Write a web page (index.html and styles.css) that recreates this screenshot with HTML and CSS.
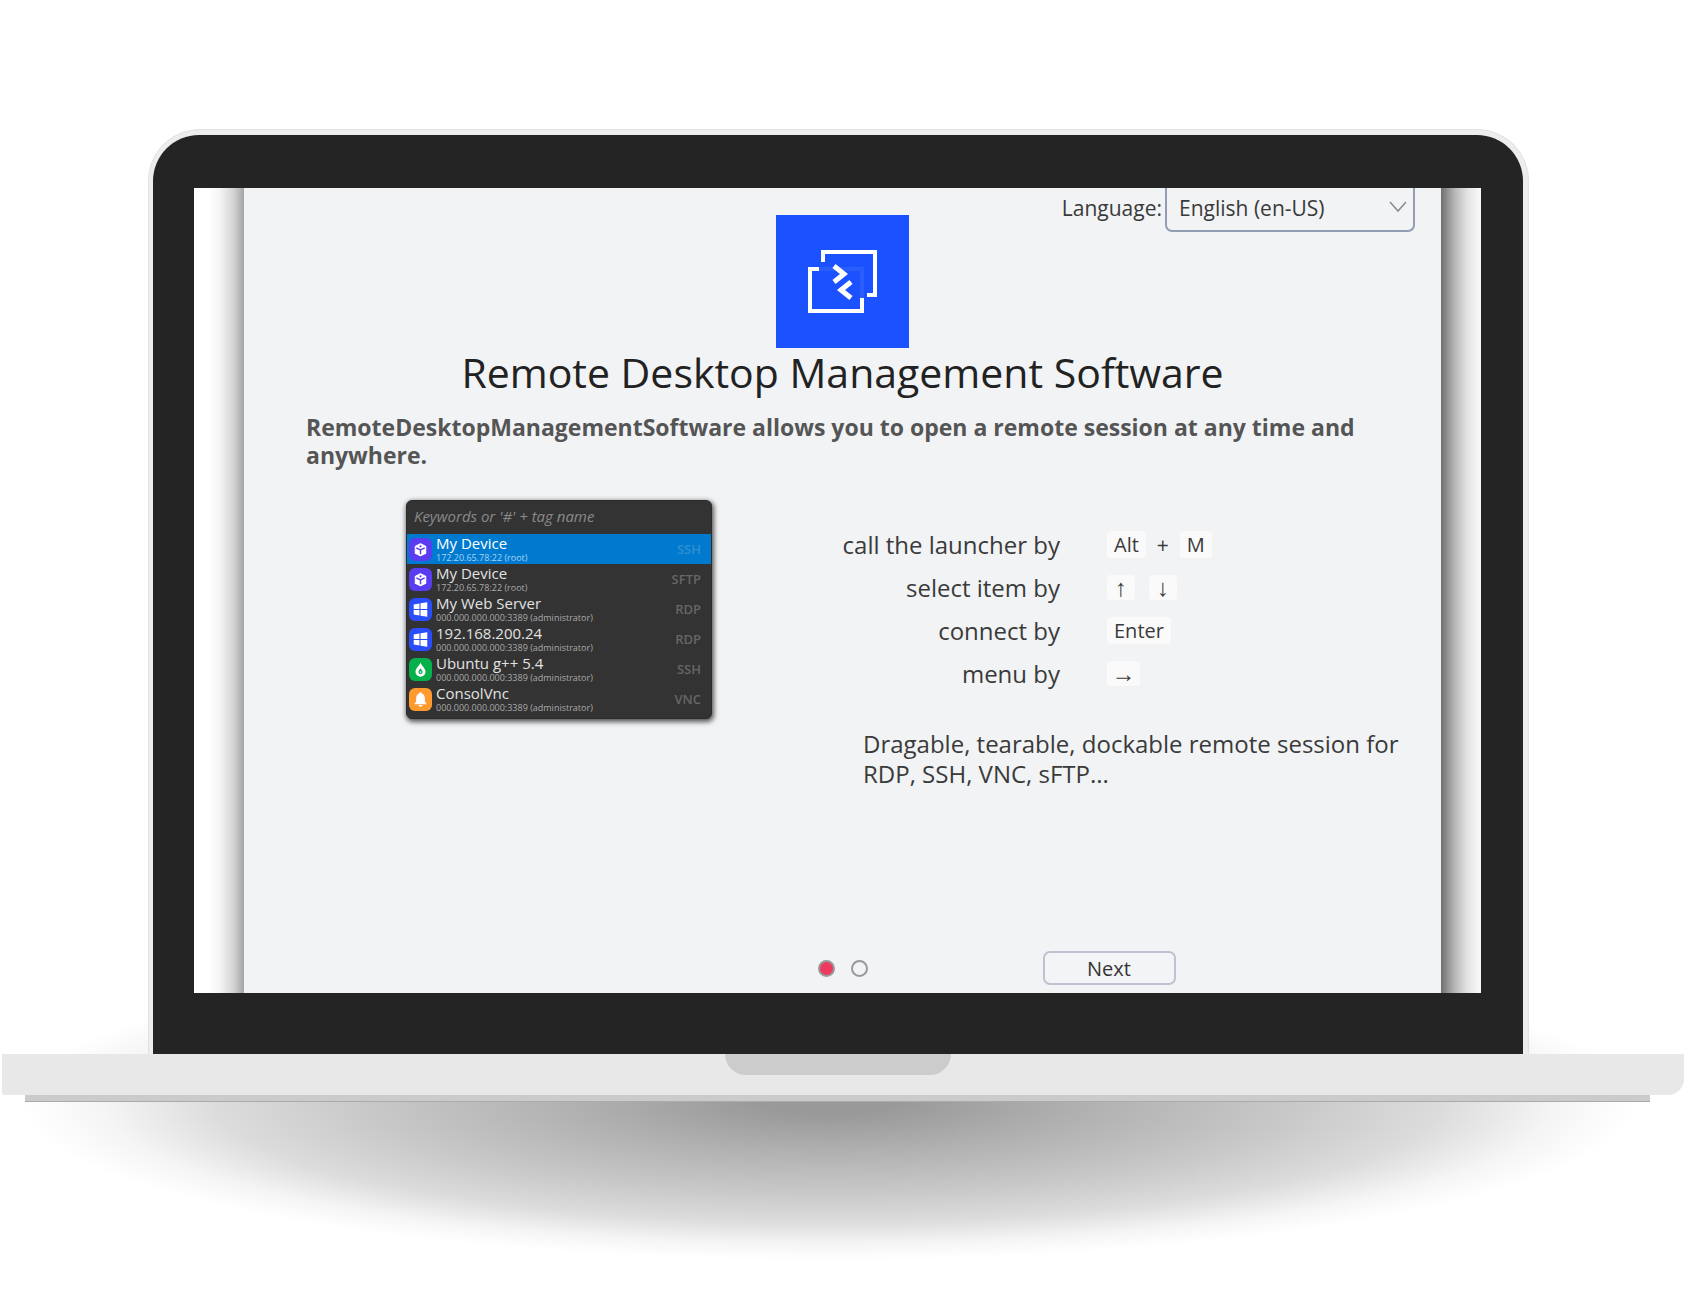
FILE: index.html
```html
<!DOCTYPE html>
<html lang="en">
<head>
<meta charset="utf-8">
<meta name="viewport" content="width=device-width, initial-scale=1">
<title>Remote Desktop Management Software</title>
<link rel="stylesheet" href="styles.css">
</head>
<body>
<svg class="symbols" aria-hidden="true">
  <symbol id="cube" viewBox="0 0 22 22">
    <path fill="#fff" stroke="#fff" stroke-linejoin="round" d="M11 5.500 16 8V14.500L11 17 6 14.500V8Z"/>
    <path fill="none" stroke="#5a3df0" stroke-width="1.400" d="M7 9.500 11 11.500 15 9.500M11 11.500V15.500"/>
    <circle cx="11" cy="8" r="1" fill="#5a3df0"/>
  </symbol>
  <symbol id="windows" viewBox="0 0 22 22">
    <path fill="#fff" d="M4.500 6.200 10 5.300V10.500H4.500ZM11 5.100 17.500 4V10.500H11ZM4.500 11.500H10V16.700L4.500 15.900ZM11 11.500H17.500V18L11 16.900Z"/>
  </symbol>
  <symbol id="drop" viewBox="0 0 22 22">
    <path fill="#fff" d="M11 4C11.500 7 15.800 9.500 15.800 13.200A4.800 4.800 0 0 1 6.200 13.200C6.200 9.500 10.500 7 11 4Z"/>
    <path fill="#06b04b" d="M11 9.500C11.300 11 13 11.800 13 13.500A2 2 0 0 1 9 13.500C9 11.800 10.700 11 11 9.500Z"/>
    <circle cx="11" cy="13.400" r="0.800" fill="#fff"/>
  </symbol>
  <symbol id="bell" viewBox="0 0 22 22">
    <path fill="#fff" d="M11 4A1.200 1.200 0 0 1 12.200 5.200C14.500 6 15.200 8 15.200 10.500V13L17 15.500H5L6.800 13V10.500C6.800 8 7.500 6 9.800 5.200A1.200 1.200 0 0 1 11 4ZM9 16.300H13A2 1.700 0 0 1 9 16.300Z"/>
  </symbol>
</svg>

<main class="laptop">
  <div class="lid">
    <div class="bezel">
      <div class="screen">
        <section class="panel">
          <header class="top">
            <svg class="logo" viewBox="0 0 133 133" role="img" aria-label="Logo">
              <rect width="133" height="133" fill="#1c51ff"/>
              <path fill="none" stroke="#2b5dfc" stroke-width="4" d="M43 54H86V83"/>
              <path fill="none" stroke="#fff" stroke-width="4" d="M47 47V37H99V80H91M43 54H34V96H86V83"/>
              <path fill="none" stroke="#fff" stroke-width="5" d="M58 51 68 59 58 67M75 67 65 75 75 83"/>
            </svg>
            <div class="language">
              <label for="lang">Language:</label>
              <span class="select">
                <select id="lang"><option>English (en-US)</option></select>
                <svg class="chevron" viewBox="0 0 18 12" aria-hidden="true"><path fill="none" stroke="#888c90" stroke-width="1.500" d="M1 1 9 10 17 1"/></svg>
              </span>
            </div>
          </header>
          <h1 class="title">Remote Desktop Management Software</h1>
          <p class="lead">RemoteDesktopManagementSoftware allows you to open a remote session at any time and anywhere.</p>
          <div class="features">
            <div class="launcher">
              <input class="search" type="text" aria-label="Search" placeholder="Keywords or '#' + tag name">
              <ul class="hosts">
                <li class="host active"><svg class="badge violet"><use href="#cube"/></svg><div class="info"><span class="name">My Device</span><span class="address">172.20.65.78:22 (root)</span></div><span class="protocol">SSH</span></li>
                <li class="host"><svg class="badge violet"><use href="#cube"/></svg><div class="info"><span class="name">My Device</span><span class="address">172.20.65.78:22 (root)</span></div><span class="protocol">SFTP</span></li>
                <li class="host"><svg class="badge blue"><use href="#windows"/></svg><div class="info"><span class="name">My Web Server</span><span class="address">000.000.000.000:3389 (administrator)</span></div><span class="protocol">RDP</span></li>
                <li class="host"><svg class="badge blue"><use href="#windows"/></svg><div class="info"><span class="name">192.168.200.24</span><span class="address">000.000.000.000:3389 (administrator)</span></div><span class="protocol">RDP</span></li>
                <li class="host"><svg class="badge green"><use href="#drop"/></svg><div class="info"><span class="name">Ubuntu g++ 5.4</span><span class="address">000.000.000.000:3389 (administrator)</span></div><span class="protocol">SSH</span></li>
                <li class="host"><svg class="badge orange"><use href="#bell"/></svg><div class="info"><span class="name">ConsolVnc</span><span class="address">000.000.000.000:3389 (administrator)</span></div><span class="protocol">VNC</span></li>
              </ul>
            </div>
            <div class="details">
              <dl class="shortcuts">
                <dt>call the launcher by</dt><dd><kbd>Alt</kbd><span class="plus">+</span><kbd>M</kbd></dd>
                <dt>select item by</dt><dd class="arrows"><kbd class="arrow">↑</kbd><kbd class="arrow">↓</kbd></dd>
                <dt>connect by</dt><dd><kbd>Enter</kbd></dd>
                <dt>menu by</dt><dd><kbd class="arrow wide">→</kbd></dd>
              </dl>
              <p class="summary">Dragable, tearable, dockable remote session for RDP, SSH, VNC, sFTP...</p>
            </div>
          </div>
          <footer class="bottom">
            <div class="dots">
              <input type="radio" name="page" aria-label="Page 1" checked>
              <input type="radio" name="page" aria-label="Page 2">
            </div>
            <button class="next" type="button">Next</button>
          </footer>
        </section>
      </div>
    </div>
  </div>
  <div class="base"><div class="notch"></div></div>
  <div class="foot"></div>
</main>
</body>
</html>
```
FILE: styles.css
```css
* { box-sizing: border-box; }

body {
  margin: 0;
  background: #fff;
  color: #3a3a3a;
  font-family: "Open Sans", "Noto Sans", sans-serif;
  font-size: 24px;
}

.symbols { display: none; }

/* Laptop frame */
.laptop {
  position: relative;
  z-index: 0;
  padding: 129px 9px 198px 2px;
}

.lid {
  margin: 0 155px 0 146px;
  padding: 6px 6px 0 5px;
  border: 1px solid #e2e2e2;
  border-bottom: 0;
  border-radius: 52px 52px 0 0;
  background: #ededed;
}

.bezel {
  padding: 53px 42px 61px 41px;
  margin: -1px -1px 0;
  border-radius: 46px 46px 0 0;
  background: #242424;
}

.screen {
  padding: 0 40px 0 50px;
  background:
    linear-gradient(to left, #a4a4a4, #d2d2d2 10px, #f4f4f4 24px, #fff 36px) left / 50px 100% no-repeat,
    linear-gradient(to right, #707070, #b8b8b8 14px, #e2e2e2 26px, #fafafa) right / 40px 100% no-repeat,
    #fff;
}

.base {
  position: relative;
  height: 41px;
  border-radius: 0 0 16px 2px;
  background: #e8e8e8;
}

.base::before {
  content: "";
  position: absolute;
  z-index: -1;
  top: -110px;
  left: 20px;
  right: 48px;
  height: 316px;
  background: radial-gradient(closest-side, #999 8%, #b0b0b0 31%, #c8c8c8 57%, #dcdcdc 76%, #f5f5f5 90%, #fff);
}

.notch {
  width: 226px;
  height: 21px;
  margin: 0 auto;
  transform: translateX(-5px);
  border-radius: 0 0 21px 21px;
  background: #ccc;
}

.foot {
  height: 7px;
  margin: 0 34px 0 23px;
  border-bottom: 1px solid #aaa;
  background: #cbcbcb;
}

/* Welcome panel */
.panel {
  display: flex;
  flex-direction: column;
  background: #f1f3f5;
  padding-bottom: 8px;
}

.top {
  display: grid;
  grid-template-columns: 1fr 133px 1fr;
  padding: 0 26px;
}

.logo {
  grid-column: 2;
  width: 133px;
  height: 133px;
  margin-top: 27px;
}

.language {
  display: flex;
  align-items: center;
  justify-content: flex-end;
  align-self: start;
  gap: 3px;
  font-size: 21px;
}

.language label { padding-bottom: 4px; }

.select { position: relative; }

.select select {
  display: block;
  width: 250px;
  height: 44px;
  padding: 0 12px 2px;
  appearance: none;
  border: 2px solid #929db4;
  border-top: 0;
  border-radius: 0 0 7px 7px;
  background: transparent;
  color: inherit;
  font: inherit;
}

.chevron {
  position: absolute;
  top: 13px;
  right: 8px;
  width: 18px;
  height: 12px;
}

.title {
  margin: 0;
  color: #222;
  font-size: 41px;
  font-weight: 400;
  line-height: 48px;
  text-align: center;
}

.lead {
  margin: 17px 50px 0 62px;
  color: #555;
  font-size: 23px;
  font-weight: 700;
  line-height: 28px;
}

.features {
  display: grid;
  grid-template-columns: 306px 1fr;
  gap: 125px;
  padding: 31px 40px 0 162px;
}

/* Launcher preview */
.launcher {
  align-self: start;
  overflow: hidden;
  padding-bottom: 4px;
  border: 1px solid #2c2c2c;
  border-radius: 6px;
  background: #333;
  box-shadow: 1px 2px 5px 1px #555;
}

.search {
  display: block;
  width: 100%;
  height: 33px;
  padding: 0 7px 3px;
  border: 0;
  background: transparent;
  color: #ddd;
  font: italic 15px "Open Sans", sans-serif;
}

.search::placeholder { color: #8a8a8a; }

.hosts {
  margin: 0;
  padding: 0;
  list-style: none;
}

.host {
  display: flex;
  align-items: center;
  gap: 4px;
  height: 30px;
  padding: 0 10px 0 2px;
}

.host.active { background: #007acf; }

.badge {
  flex: none;
  width: 23px;
  height: 23px;
  border-radius: 6px;
}

.violet { background: #5a3df0; }
.blue { background: #2b4dfb; }
.green { background: #06b04b; }
.orange { background: #ff9a2e; }

.info {
  display: flex;
  flex: 1;
  flex-direction: column;
}

.name {
  color: #e2e2e2;
  font-size: 15px;
  line-height: 18px;
}

.address {
  color: #aaa;
  font-size: 9px;
  line-height: 12px;
}

.active .name { color: #fff; }
.active .address { color: #a9d3f2; }

.protocol {
  color: #666;
  font-size: 13px;
  font-weight: 600;
}

.active .protocol { color: #2f8fd0; }

/* Shortcuts */
.shortcuts {
  display: grid;
  grid-template-columns: 223px 1fr;
  grid-auto-rows: 43px;
  column-gap: 47px;
  align-items: center;
  margin: 23px 0 0;
}

.shortcuts dt {
  text-align: right;
  white-space: nowrap;
}

.shortcuts dd {
  display: flex;
  align-items: center;
  gap: 11px;
  margin: 0;
  font-size: 21px;
}

.shortcuts .arrows { gap: 14px; }

kbd {
  padding: 0 7px;
  border-radius: 4px;
  background: #fafafa;
  font-family: inherit;
  font-size: 20px;
  line-height: 27px;
}

.arrow {
  width: 28px;
  padding: 0;
  font-family: "Liberation Sans", sans-serif;
  font-size: 24px;
  line-height: 25px;
  text-align: center;
}

.wide { width: 33px; }

.summary {
  margin: 34px 0 0 26px;
  line-height: 30px;
}

/* Pager */
.bottom {
  display: grid;
  grid-template-columns: 1fr auto 1fr;
  align-items: center;
  margin-top: 162px;
}

.dots {
  display: flex;
  grid-column: 2;
  gap: 16px;
}

.dots input {
  width: 17px;
  height: 17px;
  margin: 0;
  appearance: none;
  border: 2px solid #999;
  border-radius: 50%;
}

.dots input:checked { background: #ee3a61; }

.next {
  width: 133px;
  height: 34px;
  margin-left: 175px;
  padding: 2px 0 0;
  border: 2px solid #bcc2cf;
  border-radius: 7px;
  background: #f3f4f6;
  color: #333;
  font: 20px/28px "Open Sans", sans-serif;
}
```
